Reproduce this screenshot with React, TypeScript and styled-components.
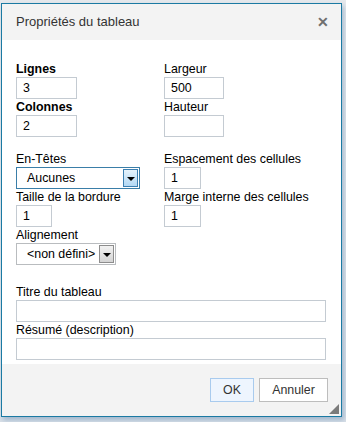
import React from "react";
import styled, { createGlobalStyle } from "styled-components";

const Global = createGlobalStyle`
  html, body { margin: 0; padding: 0; }
  body {
    background: #e6eaee;
    font-family: "Liberation Sans", Arial, sans-serif;
    width: 346px;
    height: 422px;
    overflow: hidden;
  }
`;

const Page = styled.div`
  position: relative;
  width: 346px;
  height: 422px;
  padding: 3px 0 0 1px;
  box-sizing: border-box;
  background: linear-gradient(#e6e9ec, #d9e0e8);
`;

const Dialog = styled.div`
  width: 341px;
  height: 414px;
  box-sizing: border-box;
  border: 1px solid #1b7aa3;
  background: #fff;
  display: flex;
  flex-direction: column;
  box-shadow: 2px 3px 5px rgba(90, 130, 170, 0.45);
`;

const TitleBar = styled.div`
  height: 36px;
  flex: none;
  background: #f3f3f3;
  display: flex;
  align-items: center;
  justify-content: space-between;
  padding: 0 12px 2px 14px;
  box-sizing: border-box;
`;

const Title = styled.div`
  font-size: 13px;
  color: #333;
`;

const Close = styled.div`
  font-size: 14px;
  font-weight: bold;
  color: #6f6f6f;
  line-height: 1;
  margin-top: 2px;
`;

const Body = styled.div`
  flex: 1;
  padding: 21px 15px 0 14px;
  box-sizing: border-box;
  display: flex;
  flex-direction: column;
`;

const Section = styled.div<{ $top?: number }>`
  display: grid;
  grid-template-columns: 148px 1fr;
  margin-top: ${(p) => p.$top ?? 0}px;
`;

const Column = styled.div`
  display: flex;
  flex-direction: column;
  align-items: flex-start;
`;

const FullColumn = styled.div`
  grid-column: 1 / 3;
  display: flex;
  flex-direction: column;
`;

const Label = styled.div<{ $bold?: boolean }>`
  font-size: 12.4px;
  line-height: 16px;
  height: 16px;
  color: #000;
  font-weight: ${(p) => (p.$bold ? "bold" : "normal")};
  white-space: nowrap;
`;

const TextBox = styled.input<{ $w: number }>`
  width: ${(p) => p.$w}px;
  height: 22px;
  box-sizing: border-box;
  border: 1px solid #c4cbd2;
  padding: 0 0 0 6px;
  margin: 0;
  font-family: "Liberation Sans", Arial, sans-serif;
  font-size: 12.4px;
  color: #000;
  background: #fff;
  outline: none;
`;

const SelectBox = styled.div<{ $w: number; $focus?: boolean }>`
  width: ${(p) => p.$w}px;
  height: 22px;
  box-sizing: border-box;
  border: 1px solid ${(p) => (p.$focus ? "#3a7ea8" : "#b9bcbf")};
  display: flex;
  align-items: center;
  justify-content: space-between;
  padding: 0 1px 0 10px;
  font-size: 12.4px;
  color: #000;
  background: #fff;
`;

const ArrowBtn = styled.div<{ $blue?: boolean }>`
  width: 15px;
  height: 18px;
  box-sizing: border-box;
  border: 1px solid ${(p) => (p.$blue ? "#3c7fb1" : "#8d8d8d")};
  background: ${(p) =>
    p.$blue
      ? "linear-gradient(#e6f3fc, #b2d8f4)"
      : "linear-gradient(#f2f2f2, #d4d4d4)"};
  display: flex;
  align-items: center;
  justify-content: center;
  &::after {
    content: "";
    border-left: 4px solid transparent;
    border-right: 4px solid transparent;
    border-top: 4px solid #000;
    margin-top: 1px;
  }
`;

const Footer = styled.div`
  height: 52px;
  flex: none;
  background: #f3f3f3;
  display: flex;
  justify-content: flex-end;
  align-items: flex-start;
  gap: 5px;
  padding: 14px 13px 0 0;
  box-sizing: border-box;
  position: relative;
`;

const Button = styled.button<{ $primary?: boolean; $w: number }>`
  width: ${(p) => p.$w}px;
  height: 24px;
  box-sizing: border-box;
  border: 1px solid ${(p) => (p.$primary ? "#a9cbee" : "#bdbdbd")};
  background: ${(p) => (p.$primary ? "#eef5fe" : "#fff")};
  font-family: "Liberation Sans", Arial, sans-serif;
  font-size: 12.4px;
  color: #333;
  padding: 0;
  margin: 0;
`;

const Grip = styled.div`
  position: absolute;
  right: 2px;
  bottom: 2px;
  width: 0;
  height: 0;
  border-left: 10px solid transparent;
  border-bottom: 10px solid #7b7b7b;
`;

export default function App() {
  return (
    <Page>
      <Global />
      <Dialog>
        <TitleBar>
          <Title>Propriétés du tableau</Title>
          <Close>✕</Close>
        </TitleBar>
        <Body>
          <Section>
            <Column>
              <Label $bold>Lignes</Label>
              <TextBox $w={61} defaultValue="3" />
              <Label $bold>Colonnes</Label>
              <TextBox $w={61} defaultValue="2" />
            </Column>
            <Column>
              <Label>Largeur</Label>
              <TextBox $w={60} defaultValue="500" />
              <Label>Hauteur</Label>
              <TextBox $w={60} defaultValue="" />
            </Column>
          </Section>
          <Section $top={14}>
            <Column>
              <Label>En-Têtes</Label>
              <SelectBox $w={124} $focus>
                <span>Aucunes</span>
                <ArrowBtn $blue />
              </SelectBox>
              <Label>Taille de la bordure</Label>
              <TextBox $w={36} defaultValue="1" />
              <Label>Alignement</Label>
              <SelectBox $w={100}>
                <span>&lt;non défini&gt;</span>
                <ArrowBtn />
              </SelectBox>
            </Column>
            <Column>
              <Label>Espacement des cellules</Label>
              <TextBox $w={37} defaultValue="1" />
              <Label>Marge interne des cellules</Label>
              <TextBox $w={37} defaultValue="1" />
            </Column>
          </Section>
          <Section $top={19}>
            <FullColumn>
              <Label>Titre du tableau</Label>
              <TextBox $w={310} defaultValue="" />
              <Label>Résumé (description)</Label>
              <TextBox $w={310} defaultValue="" />
            </FullColumn>
          </Section>
        </Body>
        <Footer>
          <Button $primary $w={44}>OK</Button>
          <Button $w={69}>Annuler</Button>
          <Grip />
        </Footer>
      </Dialog>
    </Page>
  );
}
